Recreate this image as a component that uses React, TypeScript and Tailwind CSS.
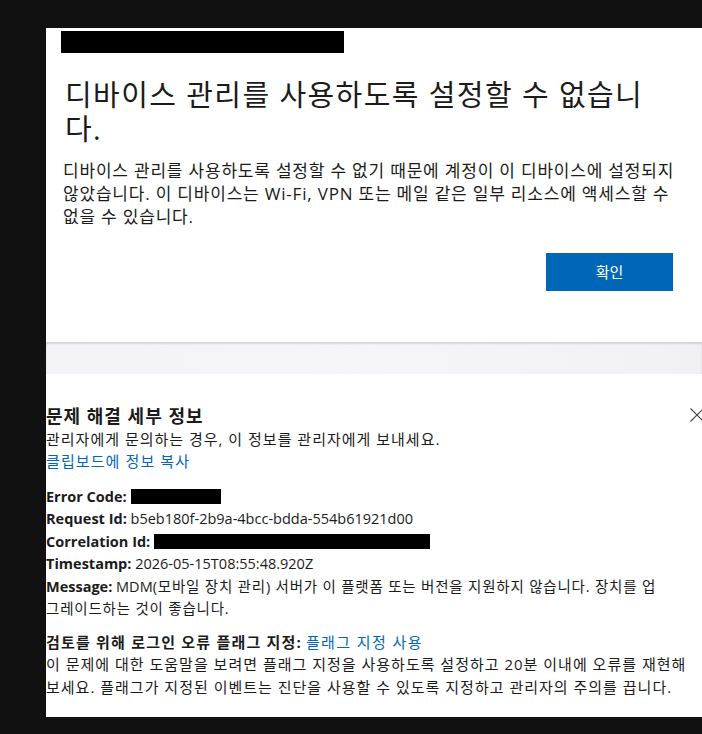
const font = {
  fontFamily: '"Segoe UI", "Open Sans", "Noto Sans CJK KR", sans-serif',
};

const Redacted = ({ w }: { w: string }) => (
  <span className={`inline-block h-[15px] ${w} bg-black align-[-2px]`} />
);

export default function App() {
  return (
    <div
      className="w-[702px] h-[734px] overflow-hidden bg-[#111111] pt-[28px] pl-[46px]"
      style={font}
    >
      <div className="w-[656px] h-[689px] flex flex-col">
        {/* dialog */}
        <section className="h-[314px] bg-white flex flex-col whitespace-nowrap">
          <div className="ml-[15px] mt-[3px] h-[22px] w-[283px] bg-black" />
          <h1 className="mt-[25px] ml-[19px] text-[29px] leading-[34px] tracking-[1.4px] font-normal text-[#1b1b1b]">
            디바이스 관리를 사용하도록 설정할 수 없습니
            <br />
            다.
          </h1>
          <p className="mt-[13px] ml-[17px] text-[17px] leading-[23px] tracking-[0.8px] text-[#1b1b1b]">
            디바이스 관리를 사용하도록 설정할 수 없기 때문에 계정이 이 디바이스에 설정되지
            <br />
            않았습니다. 이 디바이스는 Wi-Fi, VPN 또는 메일 같은 일부 리소스에 액세스할 수
            <br />
            없을 수 있습니다.
          </p>
          <div className="mt-[25px] flex justify-end pr-[29px]">
            <button className="w-[127px] h-[38px] bg-[#0067b8] text-white text-[15px]">
              확인
            </button>
          </div>
        </section>

        {/* backdrop strip */}
        <div className="h-[32px] bg-gradient-to-r from-[#f4f3f7] via-[#f6f5f9] to-[#f1f0f5] shadow-[inset_0_2px_2px_rgba(0,0,0,0.13)]" />

        {/* troubleshooting details */}
        <section className="relative flex-1 bg-white pt-[31px] text-[15px] leading-[22.5px] text-[#1b1b1b] whitespace-nowrap">
          <svg
            className="absolute left-[644px] top-[34px] w-[14px] h-[14px]"
            viewBox="0 0 14 14"
            fill="none"
            stroke="#444"
            strokeWidth="1.1"
          >
            <path d="M0.5 0.5 L13.5 13.5 M13.5 0.5 L0.5 13.5" />
          </svg>
          <h2 className="text-[18px] font-bold tracking-[1px]">문제 해결 세부 정보</h2>
          <p className="tracking-[1px]">관리자에게 문의하는 경우, 이 정보를 관리자에게 보내세요.</p>
          <a className="text-[#0067b8] tracking-[1.1px]">클립보드에 정보 복사</a>

          <div className="mt-[13px] text-[14.5px]">
            <p>
              <b>Error Code:</b> <Redacted w="w-[90px]" />
            </p>
            <p>
              <b>Request Id:</b> b5eb180f-2b9a-4bcc-bdda-554b61921d00
            </p>
            <p>
              <b>Correlation Id:</b> <Redacted w="w-[276px]" />
            </p>
            <p>
              <b>Timestamp:</b> 2026-05-15T08:55:48.920Z
            </p>
            <p>
              <b>Message:</b> MDM
              <span className="tracking-[0.8px]">
                (모바일 장치 관리) 서버가 이 플랫폼 또는 버전을 지원하지 않습니다. 장치를 업
                <br />
                그레이드하는 것이 좋습니다.
              </span>
            </p>
          </div>

          <div className="mt-[10px]">
            <p>
              <b className="tracking-[1.2px]">검토를 위해 로그인 오류 플래그 지정:</b>{" "}
              <a className="text-[#0067b8] tracking-[1.4px]">플래그 지정 사용</a>
            </p>
            <p className="tracking-[1px]">
              이 문제에 대한 도움말을 보려면 플래그 지정을 사용하도록 설정하고 20분 이내에
              오류를 재현해
              <br />
              보세요. 플래그가 지정된 이벤트는 진단을 사용할 수 있도록 지정하고 관리자의
              주의를 끕니다.
            </p>
          </div>
        </section>
      </div>
    </div>
  );
}
